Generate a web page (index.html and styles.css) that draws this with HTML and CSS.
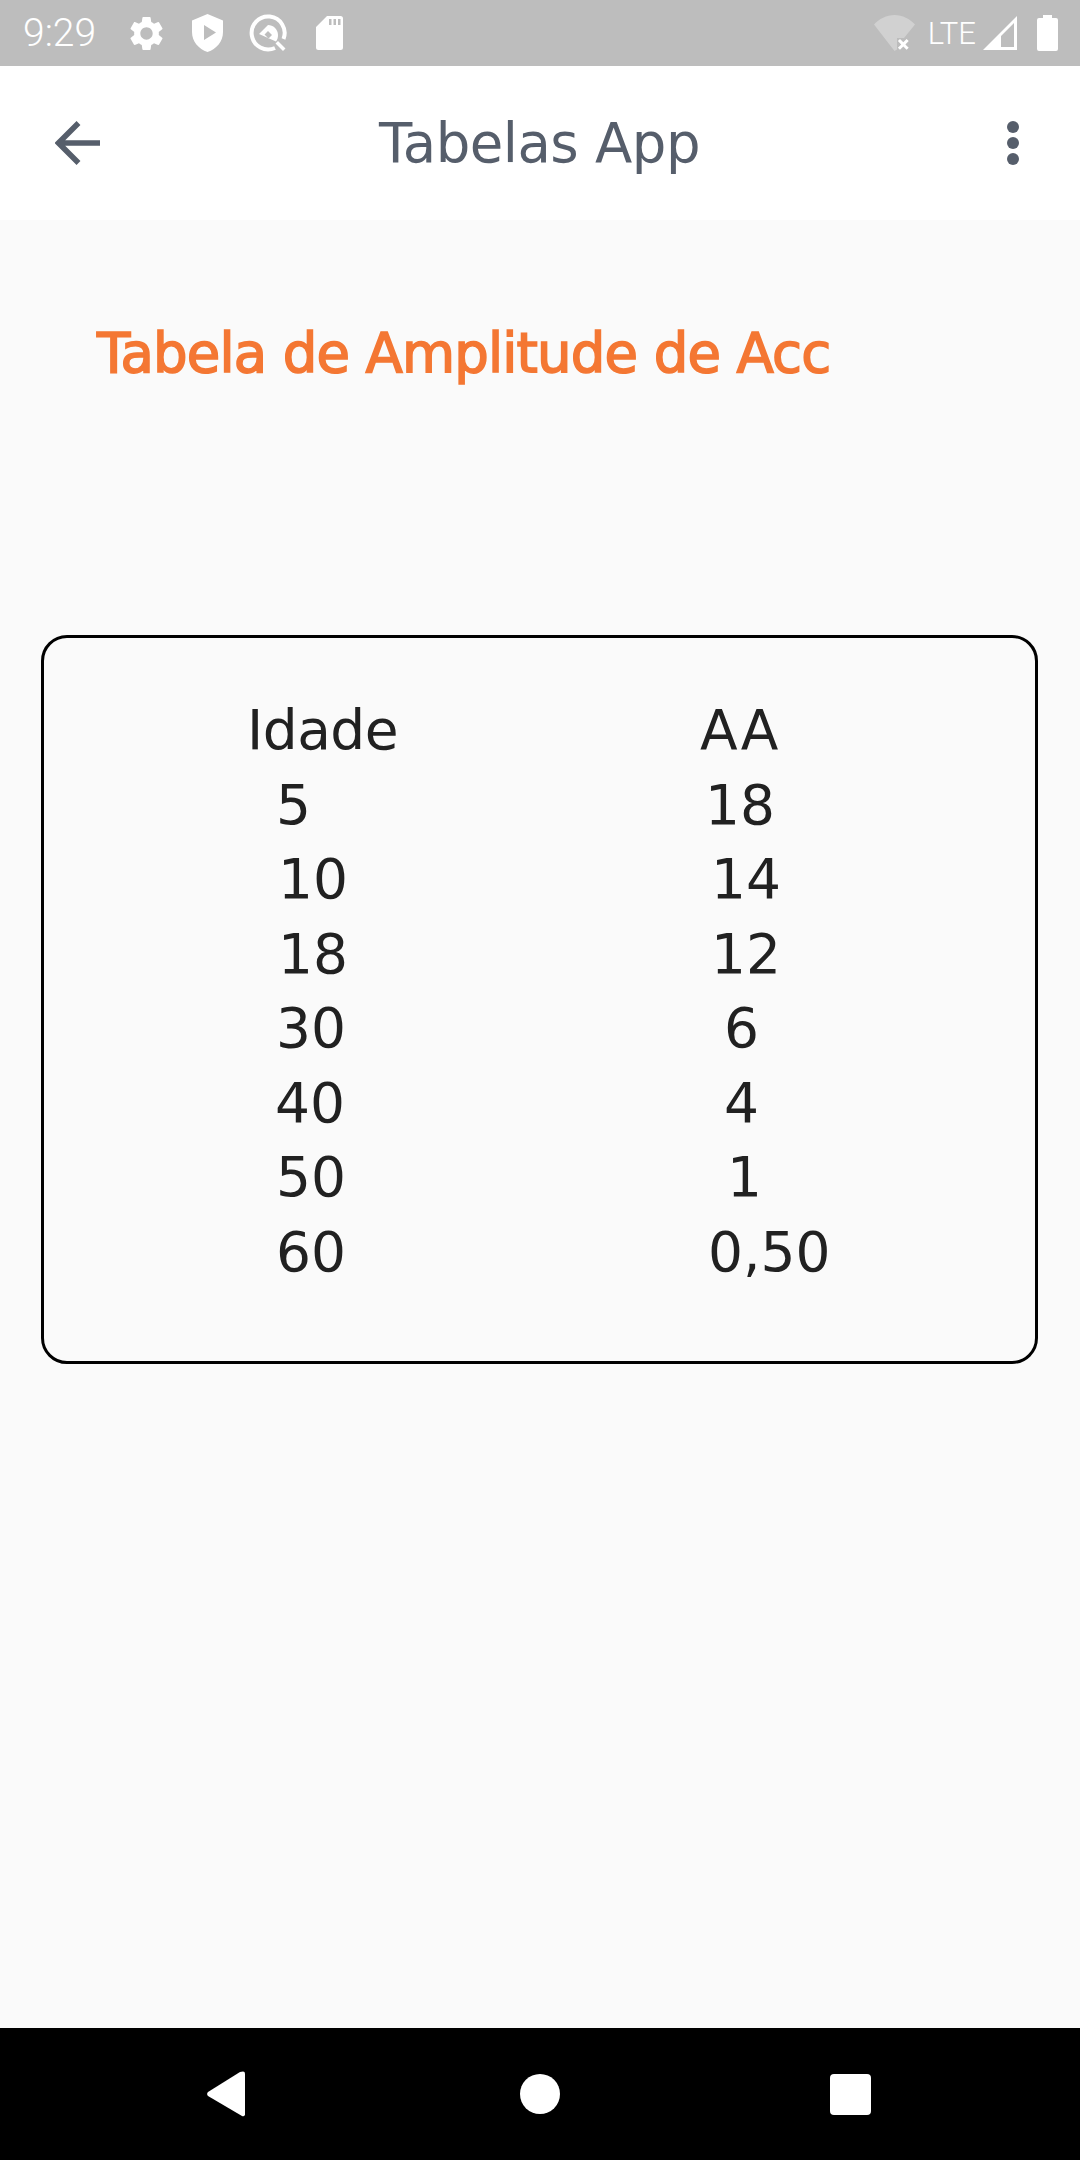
FILE: index.html
```html
<!DOCTYPE html>
<html lang="pt"><head><meta charset="utf-8"><title>Tabelas App</title><link rel="stylesheet" href="styles.css"></head>
<body>
<div class="screen">
  <div class="status">
    <div class="status-left">
      <span class="time">9:29</span>
      <svg class="ic-gear" viewBox="2.4 1.8 19.2 20.4"><path fill="#fff" d="M19.14 12.94c.04-.3.06-.61.06-.94 0-.32-.02-.64-.07-.94l2.03-1.58a.49.49 0 0 0 .12-.61l-1.92-3.32a.488.488 0 0 0-.59-.22l-2.39.96c-.5-.38-1.03-.7-1.62-.94l-.36-2.54a.484.484 0 0 0-.48-.41h-3.84c-.24 0-.43.17-.47.41l-.36 2.54c-.59.24-1.13.57-1.62.94l-2.39-.96c-.22-.08-.47 0-.59.22L2.74 8.87c-.12.21-.08.47.12.61l2.03 1.58c-.05.3-.09.63-.09.94s.02.64.07.94l-2.03 1.58a.49.49 0 0 0-.12.61l1.92 3.32c.12.22.37.29.59.22l2.39-.96c.5.38 1.03.7 1.62.94l.36 2.54c.05.24.24.41.48.41h3.84c.24 0 .44-.17.47-.41l.36-2.54c.59-.24 1.13-.56 1.62-.94l2.39.96c.22.08.47 0 .59-.22l1.92-3.32c.12-.22.07-.47-.12-.61l-2.01-1.58zM12 15.6c-1.98 0-3.6-1.62-3.6-3.6s1.62-3.6 3.6-3.6 3.6 1.62 3.6 3.6-1.62 3.6-3.6 3.6z"/></svg>
      <svg class="ic-shield" viewBox="0 0 31 38"><path fill="#fff" fill-rule="evenodd" d="M15.5 0 31 6.5V18c0 9.5-6.5 17-15.500 20C6.500 35 0 27.500 0 18V6.500ZM12 11v15l12-7.500Z"/></svg>
      <svg class="ic-q" viewBox="0 0 38 38"><path fill="none" stroke="#fff" stroke-width="4" d="M34.500 25A16.500 16.500 0 1 0 26 34"/><path fill="none" stroke="#fff" stroke-width="3.500" stroke-linecap="square" d="M29 29.500l5 5"/><path fill="#fff" fill-rule="evenodd" d="M10 20 19 11C24 11 29 15 29 21 29 23.500 28.500 25.500 27 27.500ZM15.500 20.500 19 17 23 21 19.500 24.500Z"/></svg>
      <svg class="ic-sd" viewBox="0 0 27 34"><path fill="#fff" fill-rule="evenodd" d="M11 0h13.500A2.500 2.500 0 0 1 27 2.500v29a2.500 2.500 0 0 1-2.500 2.500h-22A2.500 2.500 0 0 1 0 31.500V11ZM13 3v6h2.500V3Zm4.500 0v6H20V3ZM22 3v6h2.500V3Z"/></svg>
    </div>
    <div class="status-right">
      <svg class="ic-wifi" viewBox="0 0 42 36"><path fill="#fff" fill-opacity=".3" d="M0 9.500C5 4 12.500 0 20.500 0S36 4 41 9.500L30 23h-7v11.500l-2.500 1.500Z"/><path fill="#fff" d="m26 24 3.300 3.300 3.300-3.300 2.100 2.100-3.300 3.300 3.300 3.300-2.100 2.100-3.300-3.300-3.300 3.300-2.100-2.100 3.300-3.300-3.300-3.300Z"/></svg>
      <span class="lte">LTE</span>
      <svg class="ic-signal" viewBox="0 0 34 34"><path fill="#fff" fill-rule="evenodd" d="M34 0v34H0ZM31 7 18 20v11h13Z"/></svg>
      <svg class="ic-batt" viewBox="0 0 21 36"><path fill="#fff" d="M6 0h9v3h4a2 2 0 0 1 2 2v29a2 2 0 0 1-2 2H2a2 2 0 0 1-2-2V5a2 2 0 0 1 2-2h4Z"/></svg>
    </div>
  </div>

  <header class="appbar">
    <svg class="ic-back" viewBox="0 0 45 44"><path fill="none" stroke="#565e6b" stroke-width="5.500" d="M23.500 2 3.500 22l20 20M3.500 22H45"/></svg>
    <h1 class="app-title">Tabelas App</h1>
    <svg class="ic-more" viewBox="0 0 12 44"><circle cx="6" cy="6" r="6" fill="#565e6b"/><circle cx="6" cy="22" r="6" fill="#565e6b"/><circle cx="6" cy="38" r="6" fill="#565e6b"/></svg>
  </header>

  <main class="content">
    <h2 class="heading">Tabela de Amplitude de Acc</h2>
    <section class="card">
      <div class="tbl">
        <div class="cell c1 head">Idade</div><div class="cell c2 head">AA</div>
        <div class="cell c1 i29">5</div><div class="cell c2 i6">18</div>
        <div class="cell c1 i31">10</div><div class="cell c2 i12">14</div>
        <div class="cell c1 i31">18</div><div class="cell c2 i12">12</div>
        <div class="cell c1 i29">30</div><div class="cell c2 i25">6</div>
        <div class="cell c1 i28">40</div><div class="cell c2 i25">4</div>
        <div class="cell c1 i29">50</div><div class="cell c2 i28">1</div>
        <div class="cell c1 i29">60</div><div class="cell c2 i9">0,50</div>
      </div>
    </section>
  </main>

  <nav class="navbar">
    <svg class="nav-back" viewBox="0 0 38 46"><path fill="#fff" d="M36 0.500a2 2 0 0 1 2 2v41a2 2 0 0 1-3 1.500L1 25a3 3 0 0 1 0-4L33 1Z"/></svg>
    <span class="nav-home"></span>
    <span class="nav-recent"></span>
  </nav>
</div>
</body></html>
```
FILE: styles.css
```css
html,body{margin:0;padding:0}
body{font-family:"DejaVu Sans",sans-serif;background:#fafafa}
.screen{width:1080px;height:2160px;display:flex;flex-direction:column;overflow:hidden}

.status{height:66px;flex:none;background:#bdbdbd;display:flex;justify-content:space-between;align-items:center;color:#fff}
.status-left{display:flex;align-items:center;padding-left:23px}
.status-right{display:flex;align-items:center;padding-right:22px}
.time{font:300 39px/1 Roboto,sans-serif;width:107px}
.status svg{display:block;flex:none}
.ic-gear{width:33px;height:35px;margin-right:29px}
.ic-shield{width:31px;height:38px;margin-right:26px}
.ic-q{width:38px;height:38px;margin-right:29px}
.ic-sd{width:27px;height:34px}
.ic-wifi{width:42px;height:36px;margin-right:12px}
.lte{font:300 31px/1 Roboto,sans-serif;margin-right:7px}
.ic-signal{width:34px;height:34px;margin-right:20px}
.ic-batt{width:21px;height:36px}

.appbar{height:154px;flex:none;background:#fff;display:flex;align-items:center;justify-content:space-between;padding:0 61px 0 55px;box-sizing:border-box}
.ic-back{width:45px;height:44px}
.ic-more{width:12px;height:44px}
.app-title{margin:0 28px 0 0;font-size:54.500px;font-weight:400;color:#565e6b;line-height:1;letter-spacing:-.5px}

.content{flex:1;display:flex;flex-direction:column}
.heading{margin:98px 0 0 97px;font-size:54.500px;font-weight:400;line-height:70px;color:#f47733;-webkit-text-stroke:1.600px #f47733;letter-spacing:-.85px}
.card{margin:247px 0 0 41px;width:997px;height:729px;box-sizing:border-box;border:3px solid #000;border-radius:26px;padding:55px 0 0 203px}
.tbl{display:grid;grid-template-columns:452px 1fr;grid-auto-rows:74.500px}
.cell{font-size:55px;line-height:74.500px;color:#212121}
.head{letter-spacing:-.5px}
.c2.head{letter-spacing:1.500px;padding-left:1px}
.i6{padding-left:6px}
.i9{padding-left:9px}
.i12{padding-left:12px}
.i25{padding-left:25px}
.i28{padding-left:28px}
.i29{padding-left:29px}
.i31{padding-left:31px}

.navbar{height:132px;flex:none;background:#000;display:flex;align-items:center}
.nav-back{width:38px;height:46px;margin-left:207px;flex:none}
.nav-home{width:40px;height:40px;border-radius:50%;background:#fff;margin-left:275px;flex:none}
.nav-recent{width:41px;height:41px;border-radius:4px;background:#fff;margin-left:270px;flex:none}
```
